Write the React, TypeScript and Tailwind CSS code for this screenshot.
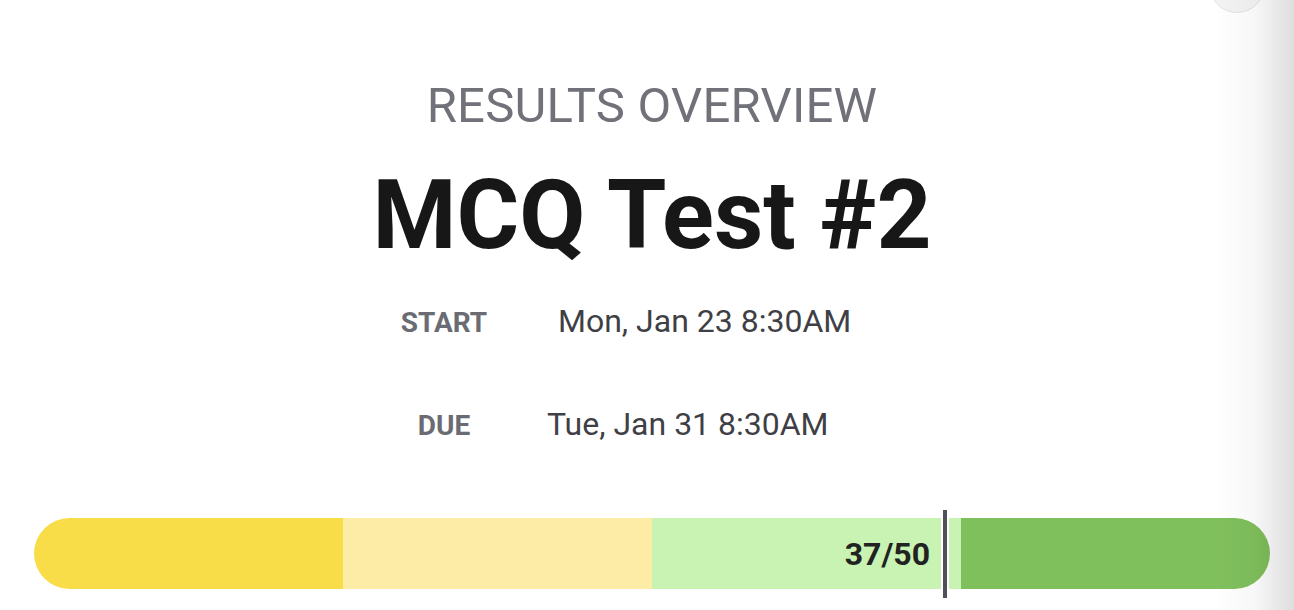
const score = 37;
const total = 50;

const segments = ["bg-[#f8dc48]", "bg-[#fcecA6]", "bg-[#c9f3b2]", "bg-[#80c05c]"];

export default function App() {
    return (
        <div className="relative h-[610px] w-[1294px] overflow-hidden bg-white font-['Roboto',sans-serif]">
            {/* top-right round button, mostly cut off */}
            <div className="absolute right-[29px] top-[-43px] h-14 w-14 rounded-full border border-[#e2e2e2] bg-[#f3f3f3]" />

            <div className="flex flex-col items-center pl-[34px] pr-[24px] pt-[81px]">
                <h2 className="text-[49px] leading-none tracking-[0.25px] text-[#71717a]">RESULTS OVERVIEW</h2>
                <h1 className="mt-[37px] text-[96px] font-bold leading-none text-[#171717]">MCQ Test #2</h1>

                <div className="mt-[42px] flex w-full flex-col pl-[350px]">
                    <div className="flex items-baseline">
                        <span className="w-[120px] text-center text-[28px] font-bold leading-none text-[#6b6b73]">START</span>
                        <span className="ml-[54px] text-[32px] leading-none text-[#3f3f46]">Mon, Jan 23 8:30AM</span>
                    </div>
                    <div className="mt-[71px] flex items-baseline">
                        <span className="w-[120px] text-center text-[28px] font-bold leading-none text-[#6b6b73]">DUE</span>
                        <span className="ml-[43px] text-[32px] leading-none text-[#3f3f46]">Tue, Jan 31 8:30AM</span>
                    </div>
                </div>

                {/* score bar */}
                <div className="relative mt-[78px] w-full">
                    <div className="flex h-[71px] w-full overflow-hidden rounded-full">
                        {segments.map((c, i) => (
                            <div key={i} className={`flex-1 ${c}`} />
                        ))}
                    </div>
                    <div className="absolute left-[907px] top-[-8px] h-[88px] w-2 border-x-2 border-white bg-[#50505a]">
                        <span className="absolute right-full top-[28px] mr-[13px] text-[32px] font-bold leading-none text-[#222]">
                            {score}/{total}
                        </span>
                    </div>
                </div>
            </div>

            {/* side shadow on the right edge */}
            <div className="pointer-events-none absolute inset-y-0 right-0 w-[80px] bg-linear-to-r from-transparent via-black/[0.03] to-black/[0.13]" />
        </div>
    );
}
